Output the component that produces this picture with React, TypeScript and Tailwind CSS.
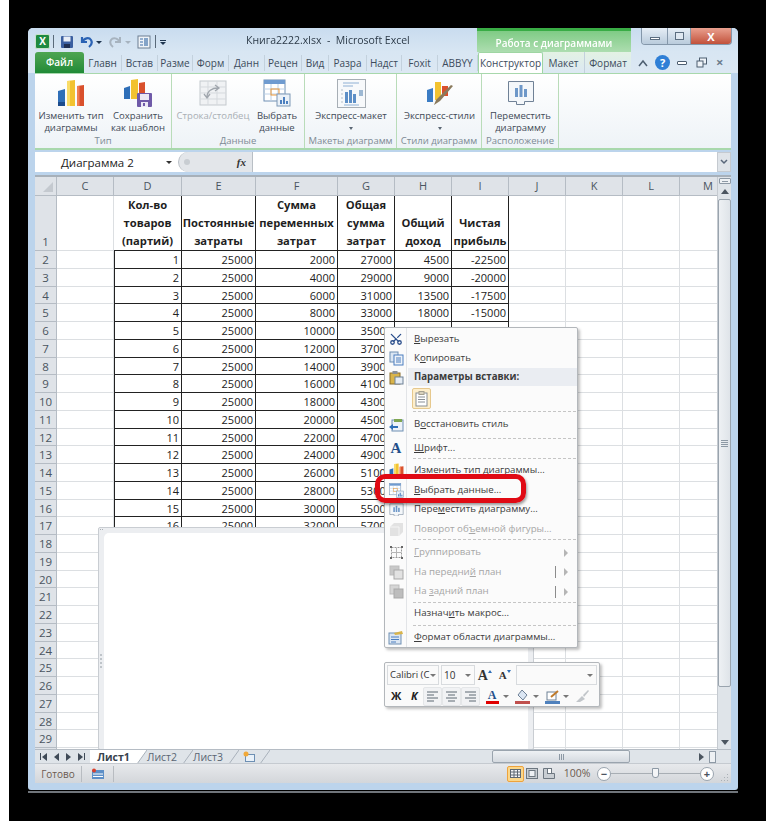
import React from "react";
import { Scissors } from "lucide-react";

const colHeads = [
  { n: "C", w: 57 },
  { n: "D", w: 68 },
  { n: "E", w: 74 },
  { n: "F", w: 82 },
  { n: "G", w: 57 },
  { n: "H", w: 57 },
  { n: "I", w: 57 },
  { n: "J", w: 57 },
  { n: "K", w: 57 },
  { n: "L", w: 57 },
  { n: "M", w: 38 },
];

const tabs = [
  { t: "Главн", w: 38 },
  { t: "Встав", w: 36 },
  { t: "Разме", w: 35 },
  { t: "Форм", w: 36 },
  { t: "Данн", w: 36 },
  { t: "Рецен", w: 37 },
  { t: "Вид", w: 27 },
  { t: "Разра", w: 38 },
  { t: "Надст", w: 35 },
  { t: "Foxit", w: 36 },
  { t: "ABBYY", w: 40 },
];

const rows = Array.from({ length: 16 }, (_, i) => {
  const n = i + 1;
  return [n, 25000, 2000 * n, 25000 + 2000 * n, 4500 * n, 4500 * n - (25000 + 2000 * n)];
});

const serif = { fontFamily: '"Liberation Serif", serif' };

const Bars = ({ size = 28 }: { size?: number }) => (
  <svg width={size} height={size} viewBox="0 0 28 28">
    <path d="M1 12l7-2v17H1z" fill="#2f6fb8" />
    <path d="M1 23h7v4H1z" fill="#1d4c8c" />
    <path d="M10 2l8-1v26h-8z" fill="#f2c230" />
    <path d="M10 2h3v25h-3z" fill="#f9dc68" />
    <path d="M20 7l7-1v21h-7z" fill="#d9502c" />
    <path d="M20 7h2.500v20H20z" fill="#ef7d52" />
  </svg>
);

const BarsSave = () => (
  <svg width="28" height="28" viewBox="0 0 28 28">
    <path d="M0 9l6-2v13H0z" fill="#2f6fb8" />
    <path d="M7 1l7-1v20H7z" fill="#f2c230" />
    <path d="M15 4l6-1v14h-6z" fill="#d9502c" />
    <rect x="13" y="14" width="15" height="14" rx="1" fill="#6f5aa8" />
    <rect x="16" y="15" width="9" height="6" fill="#ece9f5" />
    <rect x="17" y="23" width="7" height="5" fill="#ece9f5" />
    <rect x="19" y="24" width="2" height="3" fill="#6f5aa8" />
  </svg>
);

const SelectData = ({ size = 28 }: { size?: number }) => (
  <svg width={size} height={size} viewBox="0 0 28 28">
    <rect x="1" y="1" width="21" height="21" fill="#fff" stroke="#6f8fb3" />
    <rect x="1" y="1" width="21" height="4" fill="#6f9bd0" />
    <path d="M1 10h21M1 15h21M8 5v17M15 5v17" stroke="#bcd0e6" />
    <rect x="8" y="10" width="8" height="6" fill="none" stroke="#ee9a3a" />
    <rect x="14" y="15" width="13" height="12" fill="#eaf1f8" stroke="#7d98b6" />
    <path d="M17 25v-4h2v4zM20 25v-7h2v7zM23 25v-3h2v3z" fill="#4c7fbf" />
  </svg>
);

const MoveChart = ({ size = 28 }: { size?: number }) => (
  <svg width={size} height={size * 0.93} viewBox="0 0 28 26">
    <path d="M1.500 1.500h25v20h-9v3h-8v-3h-8z" fill="#f4f7fa" stroke="#6f8196" />
    <path d="M8 17V8h3v9zM12.500 17V5h3v12zM17 17V9h3v8z" fill="#6d97c8" />
  </svg>
);

const TwoSquares = ({ back }: { back?: boolean }) => (
  <svg width="15" height="15" viewBox="0 0 15 15">
    <rect x="1" y="1" width="9" height="9" fill={back ? "#d6d6d6" : "#c8c8c8"} stroke="#bdbdbd" />
    <rect x="5" y="5" width="9" height="9" fill={back ? "#bdbdbd" : "#e2e2e2"} stroke="#a9a9a9" />
  </svg>
);

const Group = ({ label, w, children }: { label: string; w: number; children: React.ReactNode }) => (
  <div className="flex flex-col shrink-0 border-r border-[#b9dcb9]" style={{ width: w }}>
    <div className="flex flex-1">{children}</div>
    <div className="h-[14px] text-center text-[9.500px] leading-[13px] text-[#7d8a95] whitespace-nowrap">{label}</div>
  </div>
);

const Big = ({ icon, lines, w, gray, drop }: { icon: React.ReactNode; lines: string[]; w: number; gray?: boolean; drop?: boolean }) => (
  <div className="flex flex-col items-center shrink-0" style={{ width: w }}>
    <div className="h-[32px] mt-[3px] flex items-center justify-center">{icon}</div>
    <div className={`text-center text-[9.500px] leading-[12px] mt-[1px] whitespace-nowrap ${gray ? "text-[#a9afb5]" : "text-[#3f4a57]"}`}>
      {lines.map((l) => (
        <div key={l}>{l}</div>
      ))}
    </div>
    {drop && <div className="mt-[5px] w-0 h-0 border-x-[2px] border-x-transparent border-t-[3px] border-t-[#5a6673]" />}
  </div>
);

const MenuItem = ({
  icon,
  children,
  gray,
  arrow,
  bar,
  h = 19,
}: {
  icon?: React.ReactNode;
  children: React.ReactNode;
  gray?: boolean;
  arrow?: boolean;
  bar?: boolean;
  h?: number;
}) => (
  <div className="flex items-center" style={{ height: h }}>
    <div className="w-[22px] flex justify-center shrink-0">{icon}</div>
    <div className={`pl-[7px] flex-1 text-[9.700px] whitespace-nowrap ${gray ? "text-[#a6a6a6]" : "text-[#3b3b3b]"}`}>{children}</div>
    {bar && <div className="w-px h-[12px] bg-[#8c8c8c] mr-[8px]" />}
    {arrow && <div className="mr-[9px] w-0 h-0 border-y-[4px] border-y-transparent border-l-[4px] border-l-[#b5b5b5]" />}
  </div>
);

const Sep = () => <div className="ml-[28px] mr-[1px] border-t border-dashed border-[#c5c5c5]" />;

const TabEdge = ({ white }: { white?: boolean }) => (
  <svg width="10" height="14" viewBox="0 0 10 14" className="shrink-0">
    {white && <path d="M0 0h10L0 14z" fill="#fff" />}
    <path d="M0 14L10 0" stroke="#a9b2bb" />
  </svg>
);

const Caret = () => <div className="w-0 h-0 border-x-[3px] border-x-transparent border-t-[3px] border-t-[#777] shrink-0" />;

export default function App() {
  return (
    <div className="h-[821px] w-[768px] bg-white pl-[9px] pr-[2px] overflow-hidden" style={{ fontFamily: '"Open Sans", "Noto Sans", sans-serif' }}>
      <div className="h-full bg-black pt-[28px] pl-[19px] pr-[28px]">
        <div className="relative w-[710px] h-[762px] rounded-t-[5px] rounded-b-[3px] bg-[#bcd4ec] flex flex-col blur-[0.45px]">
          {/* title bar */}
          <div className="h-[24px] flex items-center pl-[7px] bg-gradient-to-b from-[#c9dcef] to-[#d8e6f3] rounded-t-[5px] relative">
            <div className="w-[15px] h-[15px] mt-[3px] rounded-[2px] bg-[#1f8a3f] border border-[#c9e2c9] text-white font-bold text-[10px] leading-[13px] text-center">X</div>
            <div className="w-px h-[13px] bg-[#5a6a7a] ml-[3px] mr-[6px] mt-[3px]" />
            <svg width="14" height="14" viewBox="0 0 14 14" className="mt-[3px]">
              <rect x="1" y="1" width="12" height="12" rx="1" fill="#3b5fa0" />
              <rect x="3.500" y="1.500" width="7" height="5" fill="#e9eef6" />
              <rect x="4" y="9" width="6" height="4" fill="#1f2f52" />
            </svg>
            <svg width="14" height="14" viewBox="0 0 14 14" className="ml-[6px] mt-[3px]">
              <path d="M2 2v5h5M2.500 7C4 3 9 2 11 5c1.500 2.500.5 5-2 7" fill="none" stroke="#2a62b4" strokeWidth="2.200" />
            </svg>
            <div className="ml-[2px] mt-[4px] w-0 h-0 border-x-[3px] border-x-transparent border-t-[3px] border-t-[#1e3550]" />
            <svg width="14" height="14" viewBox="0 0 14 14" className="ml-[6px] mt-[3px]">
              <path d="M12 2v5H7M11.500 7C10 3 5 2 3 5c-1.500 2.500-.5 5 2 7" fill="none" stroke="#a7b3bf" strokeWidth="2" />
            </svg>
            <div className="ml-[3px] mt-[4px] w-0 h-0 border-x-[3px] border-x-transparent border-t-[3px] border-t-[#a7b3bf]" />
            <svg width="14" height="14" viewBox="0 0 14 14" className="ml-[6px] mt-[3px]">
              <rect x="1" y="1" width="12" height="12" fill="#eef3f8" stroke="#6d7f92" />
              <path d="M3 4h3M3 7h3M3 10h3M8 3v8M10 3v8" stroke="#3e6fa8" strokeWidth="1.200" />
            </svg>
            <div className="w-px h-[13px] bg-[#5a6a7a] ml-[4px] mt-[3px]" />
            <div className="ml-[4px] mt-[4px] flex flex-col items-center gap-[1px]">
              <div className="w-[6px] h-px bg-[#1e3550]" />
              <div className="w-0 h-0 border-x-[3px] border-x-transparent border-t-[3px] border-t-[#1e3550]" />
            </div>
            <div className="absolute left-[218px] top-[4px] text-[10.500px] leading-[16px] text-[#2c3a48] whitespace-pre">Книга2222.xlsx  -  Microsoft Excel</div>
            <div className="absolute left-[449px] top-0 w-[154px] h-[45px] bg-gradient-to-b from-[#7fcb85] to-[#d9efdb] border-t-[3px] border-t-[#39ac45] text-center text-[10px] leading-[24px] font-semibold text-white">Работа с диаграммами</div>
            <div className="absolute left-[613px] top-0 w-[91px] h-[17px] flex rounded-b-[4px] border border-t-0 border-[#8497aa] overflow-hidden">
              <div className="w-[26px] bg-gradient-to-b from-[#e6eef6] to-[#b9cbdc] flex items-center justify-center border-r border-[#8497aa]">
                <div className="w-[10px] h-[3px] border border-[#5b6d80] bg-white mt-[4px]" />
              </div>
              <div className="w-[23px] bg-gradient-to-b from-[#e6eef6] to-[#b9cbdc] flex items-center justify-center border-r border-[#8497aa]">
                <div className="w-[9px] h-[8px] border border-[#5b6d80] bg-[#dfe8f1]" />
              </div>
              <div className="flex-1 bg-gradient-to-b from-[#e9a08f] to-[#c1503a] flex items-center justify-center text-white font-bold text-[11px] leading-none">X</div>
            </div>
          </div>

          {/* tab row */}
          <div className="h-[21px] flex items-end pl-[7px] bg-gradient-to-b from-[#d8e6f3] to-[#dce8f3] relative">
            <div className="w-[49px] h-[21px] shrink-0 rounded-t-[3px] bg-gradient-to-b from-[#4ea552] to-[#1f8a37] text-white font-semibold text-[10px] leading-[21px] text-center">Файл</div>
            <div className="flex h-[21px] items-center">
              {tabs.map((t) => (
                <div
                  key={t.t}
                  className="overflow-hidden text-center text-[10px] text-[#3c4b5b] border-r border-[#c3d1dd] whitespace-nowrap h-[16px] leading-[17px] shrink-0"
                  style={{ width: t.w }}
                >
                  {t.t}
                </div>
              ))}
            </div>
            <div className="w-[65px] h-[21px] bg-white border border-b-0 border-[#9fd6a3] rounded-t-[2px] text-center text-[10px] leading-[21px] text-[#3c4b5b] shrink-0">Конструктор</div>
            <div className="w-[42px] h-[21px] text-center text-[10px] leading-[22px] text-[#3c4b5b] border-r border-[#c3d1dd] shrink-0 bg-gradient-to-b from-[#e3f2e4] to-[#dce8f3]">Макет</div>
            <div className="w-[46px] h-[21px] text-center text-[10px] leading-[22px] text-[#3c4b5b] shrink-0 bg-gradient-to-b from-[#e3f2e4] to-[#dce8f3]">Формат</div>
            <div className="flex items-center h-[21px] ml-[7px]">
              <svg width="10" height="8" viewBox="0 0 10 8"><path d="M1 7l4-5 4 5" fill="none" stroke="#4d5e70" strokeWidth="1.500" /></svg>
              <div className="ml-[7px] w-[15px] h-[15px] rounded-full bg-[#2f7fd6] text-white font-bold text-[11px] leading-[15px] text-center">?</div>
              <div className="ml-[7px] w-[10px] h-[4px] rounded-[1px] border border-[#4d5e70] bg-white" />
              <svg width="11" height="11" viewBox="0 0 11 11" className="ml-[9px]"><rect x="3.500" y="1" width="7" height="6" fill="#eef3f8" stroke="#4d5e70" /><rect x="1" y="4" width="6" height="6" fill="#eef3f8" stroke="#4d5e70" /></svg>
              <div className="ml-[9px] text-[#6d7d8d] font-bold text-[13px] leading-none">×</div>
            </div>
          </div>

          {/* ribbon */}
          <div className="mx-[7px] h-[77px] bg-gradient-to-b from-white to-[#eef3f7] border-t border-b-2 border-[#a8d8ac] flex">
            <Group label="Тип" w={137}>
              <Big w={72} icon={<Bars />} lines={["Изменить тип", "диаграммы"]} />
              <Big w={62} icon={<BarsSave />} lines={["Сохранить", "как шаблон"]} />
            </Group>
            <Group label="Данные" w={133}>
              <Big
                w={82}
                gray
                icon={
                  <svg width="28" height="26" viewBox="0 0 28 26">
                    <rect x="1" y="1" width="26" height="24" fill="#f0f2f4" stroke="#c4c9ce" />
                    <path d="M1 7h26M1 13h26M1 19h26M9 1v24M18 1v24" stroke="#d5d9dd" />
                    <path d="M8 17c0-6 5-9 11-9M16 5l4 3-4 3M5 14l3 4 3-4" fill="none" stroke="#a0a6ad" strokeWidth="1.300" />
                  </svg>
                }
                lines={["Строка/столбец"]}
              />
              <Big w={46} icon={<SelectData />} lines={["Выбрать", "данные"]} />
            </Group>
            <Group label="Макеты диаграмм" w={92}>
              <Big
                w={92}
                drop
                icon={
                  <svg width="29" height="29" viewBox="0 0 29 29">
                    <rect x="0.500" y="0.500" width="28" height="28" fill="#f7f9fb" stroke="#a7aeb5" />
                    <path d="M6 4h16M6 7h10" stroke="#8fb0d4" />
                    <path d="M4 11h2M4 15h2M4 19h2M4 23h2" stroke="#b3bfca" />
                    <path d="M8 24V13h3v11zM12 24v-13h3v13zM16 24v-9h3v9z" fill="#5d8fc7" />
                    <rect x="22" y="11" width="4" height="6" fill="#9db8d3" />
                    <path d="M7 26h15" stroke="#8fb0d4" />
                  </svg>
                }
                lines={["Экспресс-макет"]}
              />
            </Group>
            <Group label="Стили диаграмм" w={85}>
              <Big
                w={85}
                drop
                icon={
                  <svg width="28" height="26" viewBox="0 0 28 26">
                    <path d="M1 10l6-2v14H1z" fill="#3a7cc4" />
                    <path d="M9 2h6v18H9z" fill="#f2c230" />
                    <path d="M16 6h6v10h-6z" fill="#d9502c" />
                    <path d="M27 6L14 21l-6 4 2-5L25 5z" fill="#8a7a5c" />
                  </svg>
                }
                lines={["Экспресс-стили"]}
              />
            </Group>
            <Group label="Расположение" w={77}>
              <Big w={77} icon={<MoveChart />} lines={["Переместить", "диаграмму"]} />
            </Group>
          </div>

          {/* formula bar */}
          <div className="mx-[7px] mt-[2px] h-[20px] flex items-stretch bg-white">
            <div className="w-[143px] pl-[26px] text-[11.500px] leading-[19px] text-[#222] flex justify-between pr-[6px] items-center">
              <span>Диаграмма 2</span>
              <div className="w-0 h-0 border-x-[3px] border-x-transparent border-t-[3px] border-t-[#333]" />
            </div>
            <div className="w-[74px] rounded-l-[10px] bg-[#e3e6ea] border-l border-[#b9bfc5] flex items-center justify-between pl-[5px] pr-[6px]">
              <div className="w-[6px] h-[6px] rounded-full bg-[#c8cdd2]" />
              <span className="text-[#333] italic font-bold text-[11px]" style={serif}>fx</span>
            </div>
            <div className="flex-1 border-l border-[#b9bfc5]" />
            <div className="w-[14px] bg-[#dfe4e9] border border-[#c5cad0] flex items-center justify-center">
              <svg width="8" height="6" viewBox="0 0 8 6"><path d="M1 1l3 3 3-3" fill="none" stroke="#59677a" strokeWidth="1.500" /></svg>
            </div>
          </div>

          {/* sheet */}
          <div className="mx-[7px] mt-[3px] flex-1 flex flex-col bg-white border-t-2 border-[#a7b0b9] min-h-0 relative">
            <div className="flex flex-1 min-h-0">
              <div className="flex-1 min-w-0 overflow-hidden">
                {/* column heads */}
                <div className="flex h-[19px]">
                  <div className="w-[22px] shrink-0 bg-[#dfe3e8] border-r border-b border-[#b5bcc4] relative overflow-hidden">
                    <div className="absolute right-[3px] bottom-[3px] w-0 h-0 border-l-[10px] border-l-transparent border-b-[10px] border-b-[#c4c9cf]" />
                  </div>
                  {colHeads.map((c) => (
                    <div
                      key={c.n}
                      className={`shrink-0 bg-[#dfe3e8] border-r border-b border-[#b5bcc4] text-center text-[11px] leading-[18px] text-[#4a5560] ${c.n === "M" ? "pl-[18px] border-r-0" : ""}`}
                      style={{ width: c.w }}
                    >
                      {c.n}
                    </div>
                  ))}
                </div>

                {/* row 1 */}
                <div className="flex h-[55px]">
                  <div className="w-[22px] shrink-0 bg-[#dfe3e8] border-r border-b border-[#b5bcc4] text-center text-[11.500px] text-[#4a5560] flex items-end justify-center">1</div>
                  <div className="w-[57px] shrink-0 border-b border-r border-[#dcdfe2]" />
                  {[
                    { w: 68, t: ["Кол-во", "товаров", "(партий)"] },
                    { w: 74, t: ["Постоянные", "затраты"] },
                    { w: 82, t: ["Сумма", "переменных", "затрат"] },
                    { w: 57, t: ["Общая", "сумма", "затрат"] },
                    { w: 57, t: ["Общий", "доход"] },
                    { w: 57, t: ["Чистая", "прибыль"] },
                  ].map((c) => (
                    <div
                      key={c.t[0]}
                      className="shrink-0 border-r border-b border-[#222] flex flex-col justify-end items-center text-[11.200px] leading-[18px] font-bold text-[#1f1f1f] whitespace-nowrap overflow-hidden first:border-l"
                      style={{ width: c.w }}
                    >
                      {c.t.map((l) => (
                        <div key={l}>{l}</div>
                      ))}
                    </div>
                  ))}
                  {[57, 57, 57, 38].map((w, i) => (
                    <div key={i} className="shrink-0 border-b border-r border-[#dcdfe2]" style={{ width: w }} />
                  ))}
                </div>

                {/* rows 2-29, the last strip is just filler */}
                {Array.from({ length: 29 }, (_, i) => {
                  const d = rows[i];
                  return (
                    <div key={i} className="flex h-[17.750px]">
                      <div className="w-[22px] shrink-0 bg-[#dfe3e8] border-r border-b border-[#b5bcc4] text-center text-[11.500px] leading-[17px] text-[#4a5560]">{i < 28 ? i + 2 : ""}</div>
                      <div className="w-[57px] shrink-0 border-b border-r border-[#dcdfe2]" />
                      {[68, 74, 82, 57, 57, 57].map((w, j) => (
                        <div
                          key={j}
                          className={`shrink-0 text-right pr-[2px] text-[11px] leading-[17px] text-[#222] ${d ? "border-b border-r border-[#222]" : "border-b border-r border-[#dcdfe2]"} ${d && j === 0 ? "border-l" : ""}`}
                          style={{ width: w }}
                        >
                          {d ? d[j] : ""}
                        </div>
                      ))}
                      {[57, 57, 57, 38].map((w, j) => (
                        <div key={j} className="shrink-0 border-b border-r border-[#dcdfe2]" style={{ width: w }} />
                      ))}
                    </div>
                  );
                })}
              </div>
              {/* vertical scrollbar */}
              <div className="w-[14px] shrink-0 bg-[#dfe4e9] border-l border-[#c5cad0] flex flex-col items-center">
                <div className="w-[12px] h-[6px] mt-[1px] bg-[#eef1f4] border border-[#8d99a5] rounded-[1px] flex items-center justify-center">
                  <div className="w-[6px] h-px bg-[#8d99a5]" />
                </div>
                <div className="h-[15px] flex items-center">
                  <div className="w-0 h-0 border-x-[4px] border-x-transparent border-b-[5px] border-b-[#4b5560]" />
                </div>
                <div className="w-[13px] h-[488px] bg-gradient-to-r from-[#eef1f4] to-[#dfe4e9] border border-[#9aa4ae] rounded-[2px] flex flex-col items-center justify-center gap-[1px]">
                  <div className="w-[7px] h-px bg-[#8d99a5]" />
                  <div className="w-[7px] h-px bg-[#8d99a5]" />
                  <div className="w-[7px] h-px bg-[#8d99a5]" />
                  <div className="w-[7px] h-px bg-[#8d99a5]" />
                </div>
                <div className="flex-1" />
                <div className="h-[13px] flex items-center">
                  <div className="w-0 h-0 border-x-[4px] border-x-transparent border-t-[5px] border-t-[#4b5560]" />
                </div>
              </div>
            </div>

            {/* sheet tabs */}
            <div className="h-[14px] bg-[#dfe4e9] flex items-center border-t border-[#b5bcc4] relative z-10 shrink-0">
              <div className="w-[55px] shrink-0 flex items-center pl-[5px] gap-[7px]">
                <div className="flex items-center w-[7px]">
                  <div className="w-px h-[7px] bg-[#3f4a57]" />
                  <div className="ml-px w-0 h-0 border-y-[4px] border-y-transparent border-r-[5px] border-r-[#3f4a57]" />
                </div>
                <div className="w-[5px] h-0 border-y-[4px] border-y-transparent border-r-[5px] border-r-[#3f4a57]" />
                <div className="w-[5px] h-0 border-y-[4px] border-y-transparent border-l-[5px] border-l-[#3f4a57]" />
                <div className="flex items-center w-[7px]">
                  <div className="w-0 h-0 border-y-[4px] border-y-transparent border-l-[5px] border-l-[#3f4a57]" />
                  <div className="ml-px w-px h-[7px] bg-[#3f4a57]" />
                </div>
              </div>
              <div className="w-[47px] shrink-0 h-[13px] bg-white font-bold text-[10.500px] leading-[14px] text-center text-[#37424d]">Лист1</div>
              <TabEdge white />
              <div className="w-[36px] shrink-0 pr-[6px] text-[10.500px] leading-[14px] text-center text-[#5a6673] whitespace-nowrap">Лист2</div>
              <TabEdge />
              <div className="w-[36px] shrink-0 pr-[6px] text-[10.500px] leading-[14px] text-center text-[#5a6673] whitespace-nowrap">Лист3</div>
              <TabEdge />
              <div className="w-[21px] shrink-0 flex justify-center">
                <svg width="13" height="12" viewBox="0 0 13 12">
                  <rect x="2.500" y="3.500" width="9" height="7" fill="#e9f1f9" stroke="#6d8fb3" />
                  <circle cx="3" cy="3" r="2.500" fill="#f1a93a" />
                </svg>
              </div>
              <TabEdge />
              <div className="w-[138px] shrink-0 h-[13px] ml-[222px] bg-gradient-to-b from-[#eef1f4] to-[#d5dae0] border border-[#9aa4ae] rounded-[2px] flex items-center justify-center gap-[1px]">
                <div className="w-px h-[6px] bg-[#8d99a5]" />
                <div className="w-px h-[6px] bg-[#8d99a5]" />
                <div className="w-px h-[6px] bg-[#8d99a5]" />
              </div>
              <div className="flex-1" />
              <div className="w-0 h-0 border-y-[4px] border-y-transparent border-l-[5px] border-l-[#4b5560] mr-[5px]" />
              <div className="w-[7px] h-[12px] bg-[#eef1f4] border border-[#8d99a5] mr-[15px]" />
            </div>

            {/* status bar */}
            <div className="h-[20px] bg-gradient-to-b from-[#e7e9ec] to-[#d3d6da] flex items-center relative z-10 shrink-0 border-t border-[#c5cad0]">
              <div className="w-[47px] text-[10px] text-center text-[#6b5a50] border-r border-[#b8bcc1] h-[16px] leading-[16px]">Готово</div>
              <div className="w-[32px] flex justify-center border-r border-[#b8bcc1] h-[16px] items-center">
                <svg width="14" height="12" viewBox="0 0 14 12">
                  <rect x="1" y="2" width="12" height="9" fill="#5d8fc7" />
                  <path d="M2 6h10M2 8.500h10" stroke="#fff" />
                  <circle cx="3" cy="2.500" r="2" fill="#d9402c" />
                </svg>
              </div>
              <div className="flex-1" />
              <div className="w-[17px] h-[16px] rounded-[2px] bg-[#fbd78a] border border-[#eea33c] flex items-center justify-center">
                <svg width="11" height="9" viewBox="0 0 11 9"><rect x=".5" y=".5" width="10" height="8" fill="#f3f5f7" stroke="#5d6873" /><path d="M.5 3h10M.5 6h10M4 .5v8M7.500 .5v8" stroke="#5d6873" /></svg>
              </div>
              <svg width="12" height="11" viewBox="0 0 12 11" className="ml-[2px]"><rect x=".5" y=".5" width="11" height="10" fill="#c9ced3" stroke="#6d7780" /><rect x="3" y="2.500" width="6" height="6" fill="#eef1f4" stroke="#6d7780" /></svg>
              <svg width="12" height="11" viewBox="0 0 12 11" className="ml-[5px]"><path d="M.5 .5h4v5h7v5H.5z" fill="#c9ced3" stroke="#6d7780" /><rect x="4.500" y=".5" width="4" height="5" fill="#fff" stroke="#6d7780" /></svg>
              <div className="w-[38px] ml-[3px] text-[10.500px] text-[#6b5a50] text-center">100%</div>
              <div className="ml-[1px] w-[14px] h-[14px] rounded-full bg-white border border-[#9aa4ae] text-center text-[11px] leading-[11px] font-bold text-[#4b5560]">−</div>
              <div className="relative w-[89px] h-px bg-[#a8aeb4]">
                <div className="absolute left-[41px] -top-[5px] w-[7px] h-[10px] rounded-b-[3px] bg-[#f4f5f7] border border-[#8d99a5]" />
              </div>
              <div className="w-[14px] h-[14px] rounded-full bg-white border border-[#9aa4ae] text-center text-[11px] leading-[11px] font-bold text-[#4b5560]">+</div>
              <div className="w-[17px] h-full flex items-end justify-end pr-[2px] pb-[1px]">
                <svg width="9" height="9" viewBox="0 0 9 9"><path d="M7 1h1v1H7zM4 4h1v1H4zM7 4h1v1H7zM1 7h1v1H1zM4 7h1v1H4zM7 7h1v1H7z" fill="#aab0b6" /></svg>
              </div>
            </div>

            {/* chart object */}
            <div className="absolute left-[63px] top-[350px] w-[436px] h-[223px] bg-[#eceef1] border border-[#c9cdd2] rounded-[2px] p-[5px] pb-0">
              <div className="w-full h-full bg-white rounded-tl-[5px]" />
              <div className="absolute left-[1px] top-[1px] flex gap-px">
                <div className="w-px h-px bg-[#a8aeb4]" />
                <div className="w-px h-px bg-[#a8aeb4]" />
              </div>
              <div className="absolute left-[1px] top-[126px] flex flex-col gap-[2px]">
                <div className="w-[2px] h-[2px] bg-[#bfc4c9]" />
                <div className="w-[2px] h-[2px] bg-[#bfc4c9]" />
                <div className="w-[2px] h-[2px] bg-[#bfc4c9]" />
                <div className="w-[2px] h-[2px] bg-[#bfc4c9]" />
              </div>
            </div>

            {/* context menu */}
            <div className="absolute left-[349px] top-[150px] w-[194px] h-[321px] bg-[#fbfbfb] border border-[#b3b7bb] rounded-[2px] shadow-[2px_2px_3px_rgba(0,0,0,.25)] pt-[1.500px]">
              <div className="absolute left-[21px] top-0 bottom-0 w-px bg-[#e2e4e7]" />
              <MenuItem icon={<Scissors size={14} strokeWidth={2.2} color="#2b4f8c" className="-rotate-90" />}><u>В</u>ырезать</MenuItem>
              <MenuItem
                icon={
                  <svg width="15" height="15" viewBox="0 0 15 15">
                    <rect x="1" y="1" width="8" height="10" fill="#dbe6f3" stroke="#6f8fb3" />
                    <rect x="5" y="4" width="9" height="10" fill="#eef3f9" stroke="#4c7fbf" />
                    <path d="M7 7h5M7 9h5M7 11h5" stroke="#4c7fbf" />
                  </svg>
                }
              >
                К<u>о</u>пировать
              </MenuItem>
              <div className="flex items-center h-[19px]">
                <div className="w-[22px] flex justify-center shrink-0">
                  <svg width="15" height="15" viewBox="0 0 15 15"><rect x="1" y="3" width="10" height="11" fill="#d9b44a" stroke="#8a6d2a" /><rect x="3.500" y="1" width="5" height="3" fill="#8a8f95" /><rect x="6" y="7" width="8" height="7" fill="#e6edf5" stroke="#6f8196" /></svg>
                </div>
                <div className="ml-px pl-[6px] flex-1 h-[18px] bg-[#eaedf2] text-[9.700px] leading-[18px] font-bold text-[#3b3b3b]">Параметры вставки:</div>
              </div>
              <div className="h-[24px] pl-[27px] flex items-center">
                <div className="w-[19px] h-[21px] rounded-[2px] bg-[#fdeecb] border border-[#e6c88d] flex items-center justify-center">
                  <svg width="13" height="16" viewBox="0 0 13 16"><rect x="1" y="2" width="11" height="13" fill="#fff" stroke="#8a8f95" /><path d="M3 6h7M3 8.500h7M3 11h7" stroke="#8a8f95" /><rect x="4" y="0.500" width="5" height="3" fill="#d9d2be" stroke="#a5a08f" /></svg>
                </div>
              </div>
              <Sep />
              <MenuItem
                h={26}
                icon={
                  <svg width="16" height="15" viewBox="0 0 16 15">
                    <rect x="4" y="3" width="11" height="11" fill="#eef3f9" stroke="#6f8fb3" />
                    <path d="M6 2h8v3H6z" fill="#7fa650" />
                    <path d="M1 10l4-3v2h5v2H5v2z" fill="#2f6fb8" />
                  </svg>
                }
              >
                В<u>о</u>сстановить стиль
              </MenuItem>
              <Sep />
              <MenuItem icon={<span className="text-[15px] font-bold leading-none text-[#234f8a]" style={serif}>A</span>}><u>Ш</u>рифт...</MenuItem>
              <Sep />
              <MenuItem h={23} icon={<Bars size={15} />}>Изменить тип диаграммы...</MenuItem>
              <MenuItem h={18} icon={<SelectData size={15} />}><u>В</u>ыбрать данные...</MenuItem>
              <MenuItem h={20} icon={<MoveChart size={15} />}>Пере<u>м</u>естить диаграмму...</MenuItem>
              <MenuItem
                gray
                icon={
                  <svg width="15" height="15" viewBox="0 0 15 15">
                    <path d="M1 5l4-4h9v9l-4 4H1z" fill="#e2e2e2" />
                    <path d="M1 5h9v9" fill="none" stroke="#f4f4f4" />
                  </svg>
                }
              >
                Поворот об<u>ъ</u>емной фигуры...
              </MenuItem>
              <Sep />
              <div className="h-[3px]" />
              <MenuItem
                h={20}
                gray
                arrow
                icon={
                  <svg width="15" height="15" viewBox="0 0 15 15">
                    <rect x="2.500" y="2.500" width="10" height="10" fill="none" stroke="#9a9a9a" strokeDasharray="2 1" />
                    <path d="M1 1h2v2H1zM12 1h2v2h-2zM1 12h2v2H1zM12 12h2v2h-2z" fill="#666" />
                    <path d="M7.500 3v9M3 7.500h9" stroke="#b5b5b5" />
                  </svg>
                }
              >
                <u>Г</u>руппировать
              </MenuItem>
              <MenuItem gray arrow bar icon={<TwoSquares />}>На передни<u>й</u> план</MenuItem>
              <MenuItem h={20} gray arrow bar icon={<TwoSquares back />}>На <u>з</u>адний план</MenuItem>
              <Sep />
              <MenuItem h={22}>Назнач<u>и</u>ть макрос...</MenuItem>
              <Sep />
              <MenuItem
                h={23}
                icon={
                  <svg width="16" height="15" viewBox="0 0 16 15">
                    <rect x="1" y="3" width="12" height="11" fill="#dbe6f3" stroke="#6f8fb3" />
                    <path d="M3 7h8M3 9.500h8M3 12h5" stroke="#4c7fbf" />
                    <path d="M6 3l8-2 1 3-8 1z" fill="#d9b44a" />
                  </svg>
                }
              >
                <u>Ф</u>ормат области диаграммы...
              </MenuItem>

              {/* red highlight */}
              <div className="absolute left-[-10px] top-[146px] w-[151px] h-[29px] border-[5px] border-[#e00a14] rounded-[10px] shadow-[1px_2px_3px_rgba(0,0,0,.4)]" />
            </div>

            {/* mini toolbar */}
            <div className="absolute left-[349px] top-[485px] w-[216px] h-[45px] bg-[#fafafa] border border-[#b3b7bb] rounded-[2px] shadow-[2px_2px_3px_rgba(0,0,0,.25)] px-[2px] pt-[1px]">
              <div className="flex h-[22px] items-center">
                <div className="w-[52px] h-[20px] border border-[#d8dbde] text-[9.500px] leading-[18px] pl-[2px] text-[#333] flex justify-between pr-[2px] items-center">
                  <span className="overflow-hidden whitespace-nowrap w-[40px]">Calibri (C</span>
                  <Caret />
                </div>
                <div className="ml-[2px] w-[34px] h-[20px] border border-[#d8dbde] text-[10px] leading-[18px] pl-[2px] text-[#333] flex justify-between pr-[3px] items-center">
                  <span>10</span>
                  <Caret />
                </div>
                <span className="ml-[3px] text-[14px] font-bold text-[#333]" style={serif}>A</span>
                <div className="w-0 h-0 border-x-[2px] border-x-transparent border-b-[3px] border-b-[#2f6fb8] -mt-[8px]" />
                <span className="ml-[7px] text-[11px] font-bold text-[#333]" style={serif}>A</span>
                <div className="w-0 h-0 border-x-[2px] border-x-transparent border-t-[3px] border-t-[#2f6fb8] -mt-[8px]" />
                <div className="ml-[5px] w-[82px] h-[20px] border border-[#d8dbde] flex justify-end items-center pr-[3px]">
                  <Caret />
                </div>
              </div>
              <div className="flex h-[20px] items-center pl-[4px]">
                <span className="w-[20px] text-[11px] font-bold text-[#222]">Ж</span>
                <span className="w-[12px] text-[11px] font-bold italic text-[#222]">К</span>
                {["M2 3h11M2 6h7M2 9h11M2 12h7", "M2 3h11M4 6h7M2 9h11M4 12h7", "M2 3h11M6 6h7M2 9h11M6 12h7"].map((p) => (
                  <div key={p} className="w-[19px] h-[19px] rounded-[2px] border border-[#e4e6e8] bg-[#f1f2f4] flex items-center justify-center">
                    <svg width="15" height="15" viewBox="0 0 15 15"><path d={p} stroke="#5d6873" /></svg>
                  </div>
                ))}
                <div className="ml-[5px] w-[14px] flex flex-col items-center">
                  <span className="text-[12px] leading-[12px] font-bold text-[#234f8a]" style={serif}>A</span>
                  <div className="w-[13px] h-[3px] bg-[#e00000]" />
                </div>
                <div className="ml-[4px]"><Caret /></div>
                <div className="ml-[6px] w-[15px] flex flex-col items-center">
                  <svg width="13" height="12" viewBox="0 0 13 12"><path d="M2 6l4-5 5 5-4 5z" fill="#dbe6f3" stroke="#6f8196" /></svg>
                  <div className="w-[15px] h-[3px] bg-[#c0504d]" />
                </div>
                <div className="ml-[3px]"><Caret /></div>
                <div className="ml-[6px] w-[15px] flex flex-col items-center">
                  <svg width="13" height="12" viewBox="0 0 13 12"><rect x="1" y="3" width="9" height="8" fill="#fff" stroke="#6f8196" /><path d="M5 8l7-6" stroke="#c07a2a" strokeWidth="2" /></svg>
                  <div className="w-[15px] h-[3px] bg-[#4f81bd]" />
                </div>
                <div className="ml-[3px]"><Caret /></div>
                <svg width="15" height="14" viewBox="0 0 15 14" className="ml-[6px]"><path d="M1 13l6-6 3 3-5 3zM8 6l5-5 1 1-5 6z" fill="#c2c6ca" /></svg>
              </div>
            </div>
          </div>
          <div className="h-[7px] shrink-0" />
        </div>
        <div className="mt-[1px] w-[710px] h-[2px] bg-[#70757b]" />
      </div>
    </div>
  );
}
